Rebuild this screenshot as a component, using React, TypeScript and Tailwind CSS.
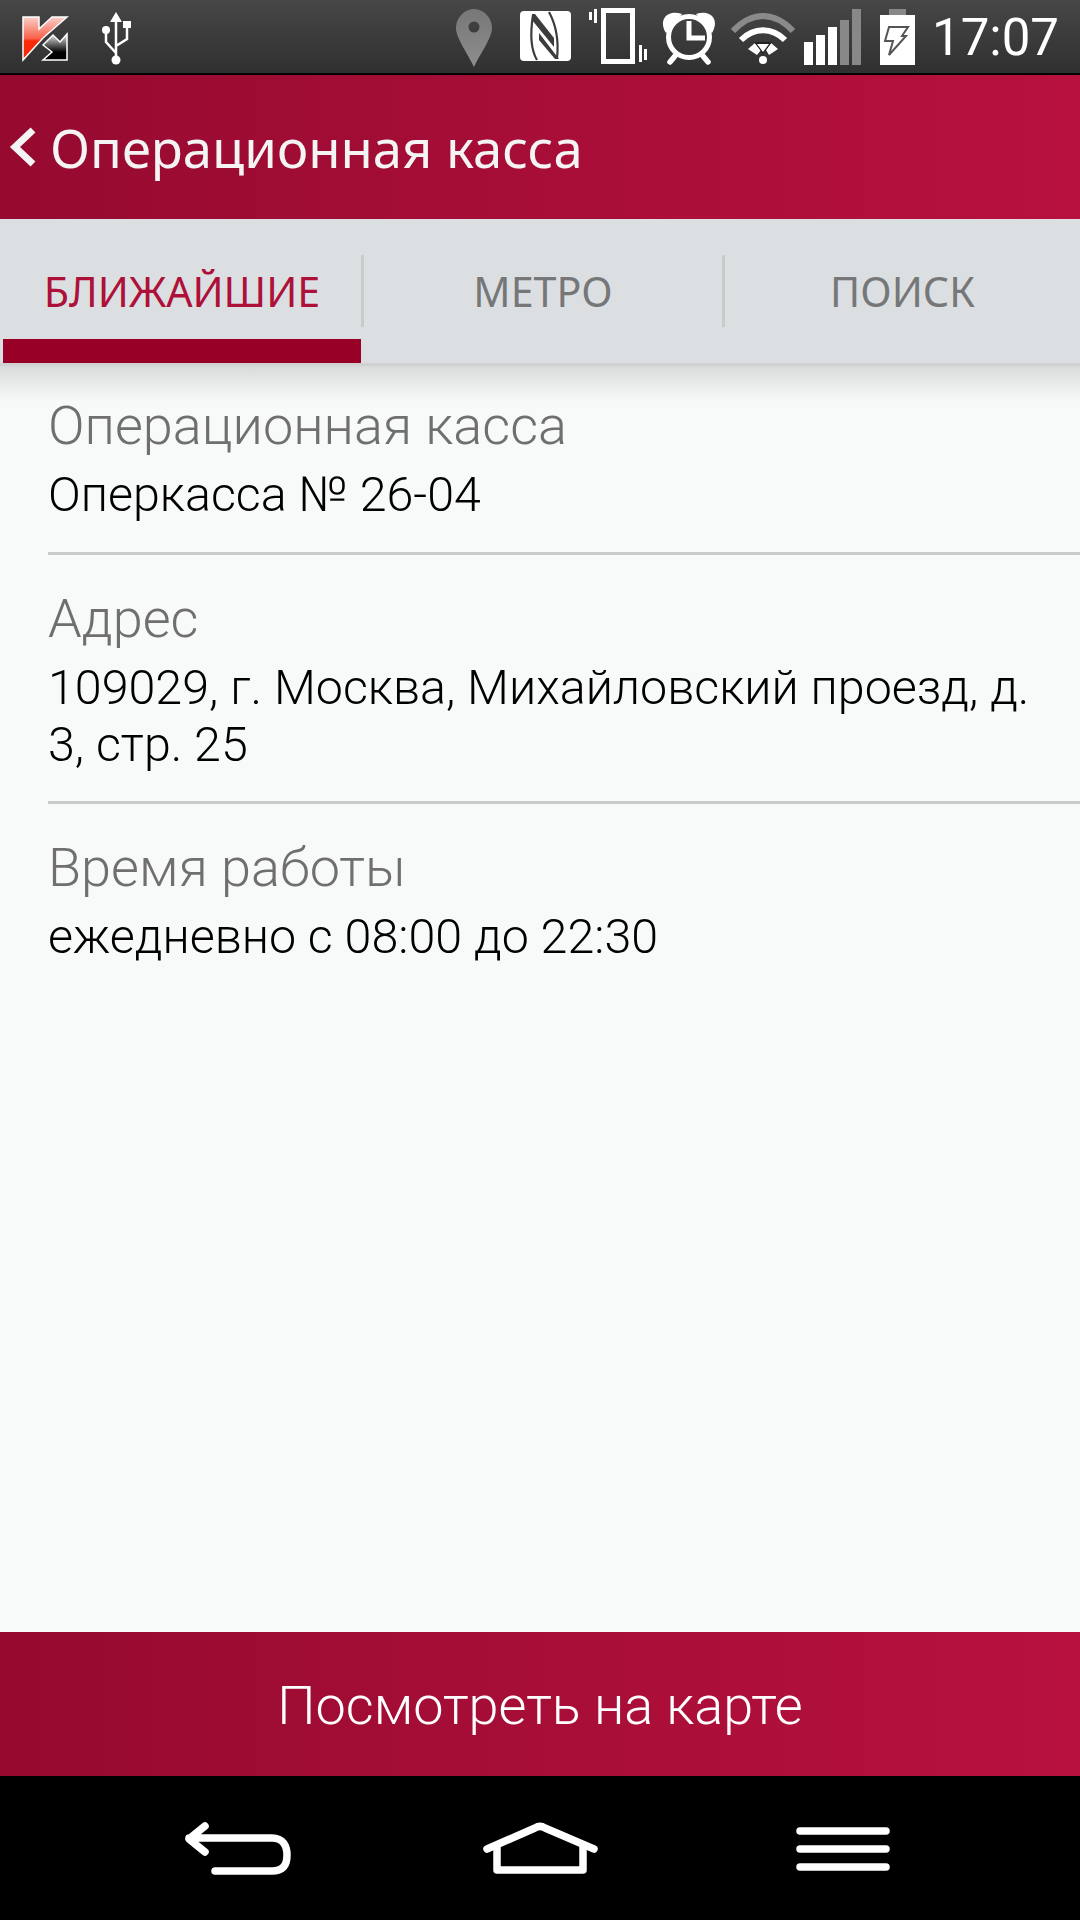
import React from "react";

function StatusIcons() {
  return (
    <svg width="1080" height="73" viewBox="0 0 1080 73" className="absolute left-0 top-0">
      <defs>
        <linearGradient id="kred" x1="0" y1="0" x2="0" y2="1">
          <stop offset="0" stopColor="#fbd0c8" />
          <stop offset="0.5" stopColor="#f8604a" />
          <stop offset="0.56" stopColor="#f92a08" />
        </linearGradient>
        <linearGradient id="kblk" x1="0" y1="0" x2="0" y2="1">
          <stop offset="0" stopColor="#e8e8e8" />
          <stop offset="0.7" stopColor="#000" />
        </linearGradient>
        <linearGradient id="pin" x1="0" y1="0" x2="0" y2="1">
          <stop offset="0" stopColor="#777" />
          <stop offset="1" stopColor="#8e8e8e" />
        </linearGradient>
      </defs>
      {/* Kaspersky */}
      <path d="M23 17H39V29L52 17H67L43 38L23 60Z" fill="url(#kred)" stroke="#fff" strokeWidth="1.500" />
      <path d="M43 45L53 35L60 42L67 34V60H43L52 52Z" fill="url(#kblk)" stroke="#fff" strokeWidth="1.500" />
      {/* USB */}
      <g fill="#fff" stroke="#fff">
        <path d="M116 12L122 22H110Z" stroke="none" />
        <circle cx="116" cy="60" r="4.500" stroke="none" />
        <circle cx="106" cy="30" r="4" stroke="none" />
        <rect x="123" y="21" width="8" height="7" stroke="none" />
        <path d="M116 20V58M106 32V42L116 53M127 27V39L116 46" fill="none" strokeWidth="2.500" />
      </g>
      {/* pin */}
      <path fillRule="evenodd" d="M474 9C483 9 492 17 492 28C492 38 480 54 474 67C468 54 456 38 456 28C456 17 465 9 474 9ZM474 21.500A5.500 5.500 0 1 0 474 32.500A5.500 5.500 0 1 0 474 21.500Z" fill="url(#pin)" />
      {/* NFC */}
      <rect x="520" y="11" width="51" height="50" rx="4" fill="#fff" />
      <path d="M533 15C530 34 531 50 537 60M549 12C556 25 559 40 557 58" fill="none" stroke="#3c3c3c" strokeWidth="2.200" />
      <path d="M532 14H535L554 38V47L532 20Z" fill="#3c3c3c" />
      <path d="M539 33L559 59H555L539 40Z" fill="#3c3c3c" />
      {/* vibrate */}
      <rect x="603.500" y="10.500" width="29" height="51" fill="none" stroke="#fff" strokeWidth="5" />
      <path d="M590.500 12V20M595.500 9V23M640.500 45V62M645.500 49V60" stroke="#fff" strokeWidth="3" />
      {/* alarm */}
      <circle cx="689" cy="37" r="20.500" fill="none" stroke="#fff" strokeWidth="5" />
      <path d="M689 21V38H705" fill="none" stroke="#fff" strokeWidth="5" />
      <path d="M666 33C658 20 667 9 682 14ZM712 33C720 20 711 9 696 14Z" fill="#fff" />
      <path d="M675 56L670 62M703 56L708 62" stroke="#fff" strokeWidth="5.500" strokeLinecap="round" />
      {/* wifi */}
      <path d="M733 31C752 11 774 11 793 31" fill="none" stroke="#8a8a8a" strokeWidth="6" />
      <path d="M741 40C754 27 772 27 785 40" fill="none" stroke="#fff" strokeWidth="6" />
      <path d="M748 49L755 43L761 50L757 55Z M778 49L771 43L766 50L769 55Z" fill="#fff" />
      <path d="M754 42H772L763 54Z" fill="#222" />
      <path d="M757 44H769L763 52Z" fill="#fff" />
      <circle cx="763" cy="60" r="4" fill="#fff" />
      {/* signal */}
      <rect x="804" y="42" width="9" height="23" fill="#fff" />
      <rect x="816" y="35" width="9" height="30" fill="#fff" />
      <rect x="828" y="27" width="9" height="38" fill="#fff" />
      <rect x="840" y="20" width="9" height="45" fill="#888" />
      <rect x="852" y="9" width="9" height="56" fill="#888" />
      {/* battery */}
      <rect x="889" y="9" width="17" height="6" fill="#888" />
      <rect x="880" y="15" width="35" height="50" fill="#fff" />
      <path d="M889 27H908L902 36H906L889 55L893 41H885Z" fill="#fff" stroke="#555" strokeWidth="2" />
    </svg>
  );
}

function Row({ label, value }: { label: string; value: React.ReactNode }) {
  return (
    <div className="flex flex-col">
      <div className="text-[54px] leading-[80px] font-light text-[#6f6f6f] whitespace-nowrap">{label}</div>
      <div className="text-[48.400px] leading-[57px] font-light text-black">{value}</div>
    </div>
  );
}

export default function App() {
  return (
    <div className="relative flex flex-col w-[1080px] h-[1920px] overflow-hidden bg-[#f8faf9] font-['Roboto',sans-serif]">
      <div className="relative h-[75px] shrink-0 border-b-2 border-black bg-gradient-to-b from-[#474747] to-[#303030]">
        <StatusIcons />
        <div className="absolute right-[21px] top-[7px] text-[51px] leading-[62px] text-white font-normal">17:07</div>
      </div>

      <div className="flex items-center h-[144px] shrink-0 bg-gradient-to-r from-[#960a30] to-[#b8113f] pl-[9px]">
        <svg width="28" height="40" viewBox="0 0 28 40" className="shrink-0">
          <path d="M24 3L6 20L24 37" fill="none" stroke="#f4f4f4" strokeWidth="7" />
        </svg>
        <div className="ml-[13px] pt-[2px] text-[52.600px] leading-[60px] text-[#f4f4f4] font-['Noto_Sans',sans-serif] whitespace-nowrap">Операционная касса</div>
      </div>

      <div className="relative flex h-[147px] shrink-0 bg-[#dcdfe2] font-['Noto_Sans',sans-serif] border-b-[3px] border-[#d0d2d2]">
        <div className="flex items-center justify-center w-[358px] ml-[3px] h-[144px] pt-[2px] text-[#ad1038] text-[41.200px]">БЛИЖАЙШИЕ</div>
        <div className="w-[3px] h-[72px] mt-[36px] bg-[#c8cbcc]" />
        <div className="flex items-center justify-center w-[358px] h-[144px] pt-[2px] text-[#757778] text-[41.200px]">МЕТРО</div>
        <div className="w-[3px] h-[72px] mt-[36px] bg-[#c8cbcc]" />
        <div className="flex items-center justify-center flex-1 h-[144px] pt-[2px] text-[#757778] text-[41.200px]">ПОИСК</div>
        <div className="absolute left-[3px] top-[120px] w-[358px] h-[24px] bg-[#990027]" />
      </div>

      <div className="relative flex-1 pl-[48px] pt-[20px]">
        <div className="absolute left-0 right-0 top-0 h-[36px] bg-gradient-to-b from-[#d9dbdb] to-[#f8faf9]" />
        <div className="relative flex flex-col">
          <Row label="Операционная касса" value="Оперкасса № 26-04" />
          <div className="h-[3px] mt-[29px] mb-[24px] bg-[#c9cbcb]" />
          <Row label="Адрес" value={<>109029, г. Москва, Михайловский проезд, д.<br />3, стр. 25</>} />
          <div className="h-[3px] mt-[28px] mb-[24px] bg-[#c9cbcb]" />
          <Row label="Время работы" value="ежедневно с 08:00 до 22:30" />
        </div>
      </div>

      <div className="flex items-center justify-center h-[144px] pt-[3px] shrink-0 bg-gradient-to-r from-[#960a30] to-[#b8113f] text-[54px] font-light text-white">Посмотреть на карте</div>

      <div className="h-[144px] shrink-0 bg-black">
        <svg width="1080" height="144" viewBox="0 1776 1080 144">
          <g fill="none" stroke="#fff" strokeWidth="7.500" strokeLinecap="round" strokeLinejoin="round">
            <path d="M205 1826L189 1839L205 1852M189 1838H272C283 1838 287 1846 287 1855C287 1865 283 1871 272 1871H215" />
            <path d="M487 1849L535 1828C538 1826 542 1826 545 1828L594 1849" />
            <path d="M497 1846V1870H583V1846" />
            <path d="M800 1831H886M800 1849H886M800 1867H886" />
          </g>
        </svg>
      </div>
    </div>
  );
}
